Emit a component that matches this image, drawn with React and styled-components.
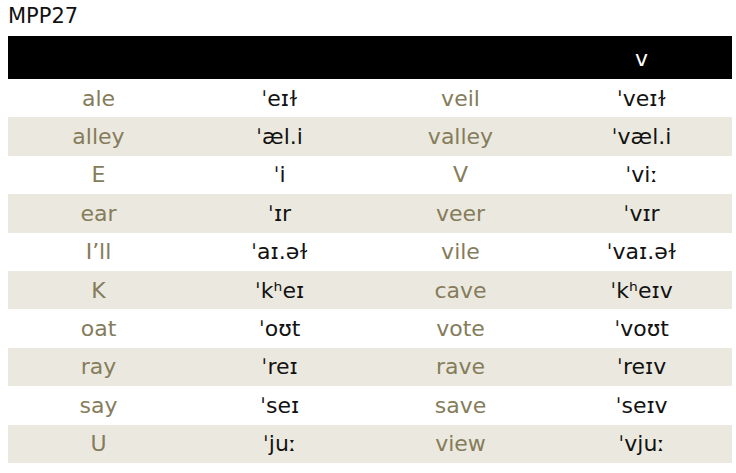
import React from 'react';
import styled, { createGlobalStyle } from 'styled-components';

const GlobalStyle = createGlobalStyle`
    body {
        margin: 0;
        background: #ffffff;
        font-family: 'DejaVu Sans', 'Liberation Sans', sans-serif;
    }
`;

const Page = styled.div`
    width: 736px;
    height: 473px;
    padding: 0 4px 0 8px;
    box-sizing: border-box;
`;

const Title = styled.h1`
    margin: 0;
    height: 36px;
    padding-top: 3px;
    box-sizing: border-box;
    font-size: 21px;
    font-weight: normal;
    color: #111111;
    line-height: 26px;
`;

const Table = styled.div`
    display: grid;
    grid-template-columns: repeat(4, 1fr);
    width: 724px;
`;

const HeadCell = styled.div`
    height: 43px;
    background: #000000;
    color: #ffffff;
    font-size: 22px;
    display: flex;
    align-items: center;
    justify-content: center;
    padding-top: 2px;
    box-sizing: border-box;
`;

const Cell = styled.div`
    height: 38.4px;
    display: flex;
    align-items: center;
    justify-content: center;
    font-size: 22px;
    background: ${p => (p.$shaded ? '#ebe9df' : '#ffffff')};
    color: ${p => (p.$word ? '#857c5b' : '#121212')};
`;

const rows = [
    ['ale', 'ˈeɪɫ', 'veil', 'ˈveɪɫ'],
    ['alley', 'ˈæl.i', 'valley', 'ˈvæl.i'],
    ['E', 'ˈi', 'V', 'ˈviː'],
    ['ear', 'ˈɪr', 'veer', 'ˈvɪr'],
    ['I’ll', 'ˈaɪ.əɫ', 'vile', 'ˈvaɪ.əɫ'],
    ['K', 'ˈkʰeɪ', 'cave', 'ˈkʰeɪv'],
    ['oat', 'ˈoʊt', 'vote', 'ˈvoʊt'],
    ['ray', 'ˈreɪ', 'rave', 'ˈreɪv'],
    ['say', 'ˈseɪ', 'save', 'ˈseɪv'],
    ['U', 'ˈjuː', 'view', 'ˈvjuː'],
];

export default function App() {
    return (
        <Page>
            <GlobalStyle />
            <Title>MPP27</Title>
            <Table>
                <HeadCell />
                <HeadCell />
                <HeadCell />
                <HeadCell>v</HeadCell>
                {rows.map((row, i) =>
                    row.map((text, j) => (
                        <Cell key={i + '-' + j} $shaded={i % 2 === 1} $word={j % 2 === 0}>
                            {text}
                        </Cell>
                    ))
                )}
            </Table>
        </Page>
    );
}
